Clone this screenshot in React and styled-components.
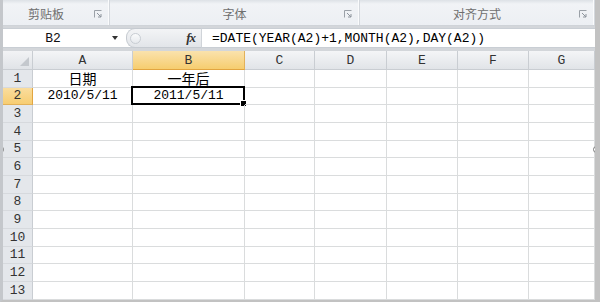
import React from 'react'
import styled, { createGlobalStyle } from 'styled-components'

const GlobalStyle = createGlobalStyle`
  html, body {
    margin: 0;
    padding: 0;
    background: #fff;
  }
`

const mono = `"Liberation Mono", "Noto Sans CJK SC", monospace`
const cjk = `"Noto Sans CJK SC", "Noto Sans", sans-serif`

const Frame = styled.div`
  position: relative;
  width: 600px;
  height: 302px;
  box-sizing: border-box;
  background: #d3d6da;
  border-left: 3px solid #c4c7cb;
  border-right: 5px solid #c2c2c2;
  border-bottom: 2px solid #c2c2c2;
  display: flex;
  flex-direction: column;
  overflow: hidden;
`

const Ribbon = styled.div`
  display: flex;
  height: 26px;
  background: linear-gradient(#dde1e6 0px, #f1f3f6 4px, #eceff3 100%);
  border-bottom: 1px solid #cfd3d8;
  box-sizing: border-box;
`

const Group = styled.div`
  position: relative;
  width: ${p => p.w}px;
  display: flex;
  align-items: center;
  justify-content: ${p => (p.left ? 'flex-start' : 'center')};
  padding-left: ${p => (p.left ? 25 : 0)}px;
  box-sizing: border-box;
  border-right: 1px solid #d4d8dd;
  box-shadow: inset -1px 0 0 #fafbfc;
  font-family: ${cjk};
  font-size: 12px;
  color: #6e6e6e;
  padding-top: 2px;
`

const Launcher = styled.svg`
  position: absolute;
  right: 7px;
  top: 10px;
`

const FormulaRow = styled.div`
  display: flex;
  height: 20px;
  margin-top: 2px;
  background: #fff;
  border-top: 1px solid #c9ced4;
  border-bottom: 1px solid #c9ced4;
  box-sizing: border-box;
`

const NameBox = styled.div`
  width: 123px;
  display: flex;
  align-items: center;
  background: #fff;
`

const NameText = styled.span`
  width: 100px;
  text-align: center;
  font-family: ${mono};
  font-size: 13px;
  color: #111;
`

const Arrow = styled.span`
  margin-left: 9px;
  width: 0;
  height: 0;
  border-left: 3px solid transparent;
  border-right: 3px solid transparent;
  border-top: 4px solid #333;
`

const Capsule = styled.div`
  width: 76px;
  display: flex;
  align-items: center;
  justify-content: space-between;
  padding: 0 6px 0 3px;
  box-sizing: border-box;
  background: linear-gradient(#f3f4f6, #e2e5e9);
  border: 1px solid #c5cad0;
  border-right-color: #d0d4d9;
  border-radius: 9px 0 0 9px;
  margin: -1px 0;
`

const Knob = styled.span`
  width: 9px;
  height: 9px;
  border-radius: 50%;
  border: 1px solid #c8cdd3;
  background: linear-gradient(#fafbfc, #e6e9ed);
`

const Fx = styled.span`
  font-family: "Liberation Serif", serif;
  font-style: italic;
  font-weight: bold;
  font-size: 13px;
  color: #333;
  letter-spacing: -1px;
`

const FormulaInput = styled.div`
  flex: 1;
  display: flex;
  align-items: center;
  padding-left: 10px;
  padding-top: 1px;
  font-family: ${mono};
  font-size: 13px;
  color: #000;
  white-space: pre;
`

const Sheet = styled.div`
  margin-top: 3px;
  flex: 1;
  display: grid;
  grid-template-columns: 30px 100px 112px 70px 72px 71px 71px 1fr;
  grid-template-rows: 19px repeat(13, 17.67px);
  background: #fff;
`

const Corner = styled.div`
  position: relative;
  background: linear-gradient(#f2f3f5, #e0e3e7);
  border-right: 1px solid #c9cdd2;
  border-bottom: 1px solid #c9cdd2;
  box-sizing: border-box;
`

const CornerMark = styled.span`
  position: absolute;
  right: 3px;
  bottom: 3px;
  width: 0;
  height: 0;
  border-left: 9px solid transparent;
  border-bottom: 9px solid #c4c8cd;
`

const ColHead = styled.div`
  display: flex;
  align-items: center;
  justify-content: center;
  font-family: ${mono};
  font-size: 13px;
  color: #333;
  box-sizing: border-box;
  border-right: 1px solid ${p => (p.on ? '#e2b15a' : '#c9cdd2')};
  border-bottom: 1px solid ${p => (p.on ? '#e2a540' : '#c9cdd2')};
  background: ${p =>
    p.on ? 'linear-gradient(#fae2ad, #f6cd6f)' : 'linear-gradient(#f4f5f7, #e1e4e8)'};
`

const RowHead = styled.div`
  display: flex;
  align-items: center;
  justify-content: center;
  font-family: ${mono};
  font-size: 13px;
  color: #333;
  box-sizing: border-box;
  border-right: 1px solid ${p => (p.on ? '#e2a540' : '#c9cdd2')};
  border-bottom: 1px solid ${p => (p.on ? '#e2b15a' : '#d6d9dd')};
  background: ${p => (p.on ? 'linear-gradient(#fadd9e, #f7cd72)' : '#e4e7eb')};
`

const Cell = styled.div`
  position: relative;
  display: flex;
  align-items: center;
  justify-content: center;
  box-sizing: border-box;
  border-right: 1px solid #dadcdd;
  border-bottom: 1px solid #dadcdd;
  font-family: ${p => (p.cjk ? cjk : mono)};
  font-size: ${p => (p.cjk ? 14 : 13)}px;
  color: #000;
  overflow: visible;
`

const Selection = styled.div`
  position: absolute;
  left: -2px;
  top: -2px;
  right: -1px;
  bottom: -1px;
  border: 2px solid #000;
  pointer-events: none;
`

const FillHandle = styled.span`
  position: absolute;
  right: -4px;
  bottom: -4px;
  width: 5px;
  height: 5px;
  background: #000;
  border: 1px solid #fff;
`

const Handle = styled.span`
  position: absolute;
  width: 5px;
  height: 5px;
  border-radius: 50%;
  border: 1px solid #777;
  background: #fff;
  left: ${p => p.x}px;
  top: ${p => p.y}px;
`

const columns = ['A', 'B', 'C', 'D', 'E', 'F', 'G']

const data = {
  1: { A: '日期', B: '一年后' },
  2: { A: '2010/5/11', B: '2011/5/11' },
}

function LauncherIcon() {
  return (
    <Launcher width="8" height="8" viewBox="0 0 8 8">
      <path d="M0.5 7.5V0.5H7.5" fill="none" stroke="#9aa0a7" strokeWidth="1" />
      <path d="M3 3L7 7M7 4V7H4" fill="none" stroke="#8c939b" strokeWidth="1" />
    </Launcher>
  )
}

export default function App() {
  const rows = Array.from({ length: 13 }, (_, i) => i + 1)
  return (
    <>
      <GlobalStyle />
      <Frame>
        <Ribbon>
          <Group w={107} left>
            剪贴板
            <LauncherIcon />
          </Group>
          <Group w={250}>
            字体
            <LauncherIcon />
          </Group>
          <Group w={235}>
            对齐方式
            <LauncherIcon />
          </Group>
        </Ribbon>
        <FormulaRow>
          <NameBox>
            <NameText>B2</NameText>
            <Arrow />
          </NameBox>
          <Capsule>
            <Knob />
            <Fx>fx</Fx>
          </Capsule>
          <FormulaInput>=DATE(YEAR(A2)+1,MONTH(A2),DAY(A2))</FormulaInput>
        </FormulaRow>
        <Sheet>
          <Corner>
            <CornerMark />
          </Corner>
          {columns.map(c => (
            <ColHead key={c} on={c === 'B' ? 1 : 0}>
              {c}
            </ColHead>
          ))}
          {rows.map(r => (
            <React.Fragment key={r}>
              <RowHead on={r === 2 ? 1 : 0}>{r}</RowHead>
              {columns.map(c => {
                const v = data[r] && data[r][c]
                const isCjk = v && /[\u4e00-\u9fff]/.test(v)
                return (
                  <Cell key={c} cjk={isCjk ? 1 : 0}>
                    {v}
                    {r === 2 && c === 'B' && (
                      <Selection>
                        <FillHandle />
                      </Selection>
                    )}
                  </Cell>
                )
              })}
            </React.Fragment>
          ))}
        </Sheet>
        <Handle x={-6} y={146} />
        <Handle x={590} y={146} />
      </Frame>
    </>
  )
}
